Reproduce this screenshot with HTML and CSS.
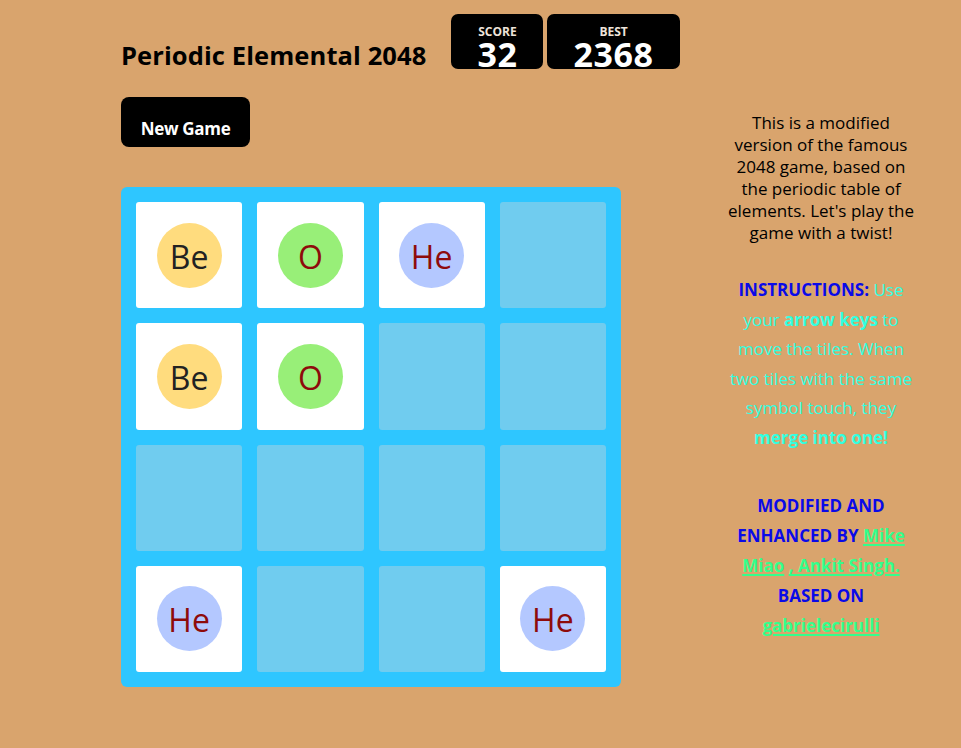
FILE: index.html
```html
<!DOCTYPE html>
<html>
<head>
<meta charset="utf-8">
<title>Periodic Elemental 2048</title>
<link rel="stylesheet" href="styles.css">
</head>
<body>
<div class="page">
  <div class="main">
    <div class="header">
      <h1 class="title">Periodic Elemental 2048</h1>
      <div class="scores">
        <div class="score-box"><div class="score-label">SCORE</div><div class="score-value">32</div></div>
        <div class="score-box"><div class="score-label">BEST</div><div class="score-value">2368</div></div>
      </div>
    </div>
    <button class="new-game">New Game</button>
    <div class="board">
      <div class="cell filled"><span class="atom be">Be</span></div>
      <div class="cell filled"><span class="atom o">O</span></div>
      <div class="cell filled"><span class="atom he">He</span></div>
      <div class="cell"></div>
      <div class="cell filled"><span class="atom be">Be</span></div>
      <div class="cell filled"><span class="atom o">O</span></div>
      <div class="cell"></div>
      <div class="cell"></div>
      <div class="cell"></div>
      <div class="cell"></div>
      <div class="cell"></div>
      <div class="cell"></div>
      <div class="cell filled"><span class="atom he">He</span></div>
      <div class="cell"></div>
      <div class="cell"></div>
      <div class="cell filled"><span class="atom he">He</span></div>
    </div>
  </div>
  <div class="side">
    <p class="intro">This is a modified version of the famous 2048 game, based on the periodic table of elements. Let's play the game with a twist!</p>
    <p class="instructions"><strong class="blue">INSTRUCTIONS:</strong> Use your <strong>arrow keys</strong> to move the tiles. When two tiles with the same symbol touch, they <strong>merge into one!</strong></p>
    <p class="credits">MODIFIED AND ENHANCED BY <a href="#">Mike Miao</a> <a href="#">, Ankit Singh.</a> BASED ON <a href="#">gabrielecirulli</a></p>
  </div>
</div>
</body>
</html>
```

FILE: styles.css
```css
html, body {
  margin: 0;
  padding: 0;
}
body {
  background: #d9a46d;
  font-family: "Open Sans", "Noto Sans", sans-serif;
  color: #000;
}
.page {
  display: flex;
  align-items: flex-start;
  padding: 14px 0 0 121px;
}
.main {
  width: 500px;
  flex-shrink: 0;
}
.header {
  display: flex;
  align-items: flex-start;
  height: 55px;
}
.title {
  margin: 26px 0 0 0;
  font-size: 25.5px;
  line-height: 30px;
  font-weight: 700;
  letter-spacing: 0.1px;
  white-space: nowrap;
  flex-shrink: 0;
}
.scores {
  display: flex;
  gap: 4px;
  margin-left: 25px;
  flex-shrink: 0;
}
.score-box {
  background: #000;
  border-radius: 7px;
  height: 55px;
  box-sizing: border-box;
  padding: 11px 26px 0;
  text-align: center;
}
.score-label {
  color: #eee4da;
  font-size: 12px;
  font-weight: 700;
  line-height: 13px;
}
.score-value {
  color: #fff;
  font-size: 34px;
  font-weight: 700;
  line-height: 30px;
  margin-top: 1px;
  letter-spacing: 0.6px;
}
.new-game {
  display: block;
  margin-top: 28px;
  width: 129px;
  height: 50px;
  border: none;
  border-radius: 8px;
  background: #000;
  color: #fff;
  font-family: inherit;
  font-size: 17px;
  font-weight: 700;
  line-height: 20px;
  padding: 13px 0 0;
  text-align: center;
  letter-spacing: -0.3px;
}
.board {
  margin-top: 40px;
  width: 500px;
  height: 500px;
  box-sizing: border-box;
  padding: 15px;
  background: #2ec6ff;
  border-radius: 6px;
  display: grid;
  grid-template-columns: repeat(4, 1fr);
  grid-template-rows: repeat(4, 1fr);
  gap: 15px;
}
.cell {
  background: #70ccef;
  border-radius: 3px;
  display: flex;
  align-items: center;
  justify-content: center;
}
.cell.filled {
  background: #fff;
}
.atom {
  width: 65px;
  height: 65px;
  box-sizing: border-box;
  padding-top: 3px;
  border-radius: 50%;
  display: flex;
  align-items: center;
  justify-content: center;
  font-size: 32px;
  line-height: 1;
  color: #8e0b0b;
}
.atom.be {
  background: #ffdc7e;
  color: #222;
}
.atom.o {
  background: #98ef78;
}
.atom.he {
  background: #b4c8ff;
}
.side {
  width: 196px;
  margin-left: 102px;
  margin-top: 98px;
  text-align: center;
  font-size: 17px;
  flex-shrink: 0;
}
.side p {
  margin: 0;
}
.intro {
  line-height: 22px;
}
.instructions {
  margin-top: 31px !important;
  line-height: 29.5px;
  color: #33ffe0;
}
.blue {
  color: #0a0ae8;
}
.credits {
  margin-top: 39px !important;
  line-height: 30px;
  font-weight: 700;
  color: #0a0ae8;
}
.credits a {
  color: #33ff8c;
  text-decoration: underline;
  text-decoration-thickness: 1.5px;
  text-underline-offset: 2px;
}
```
